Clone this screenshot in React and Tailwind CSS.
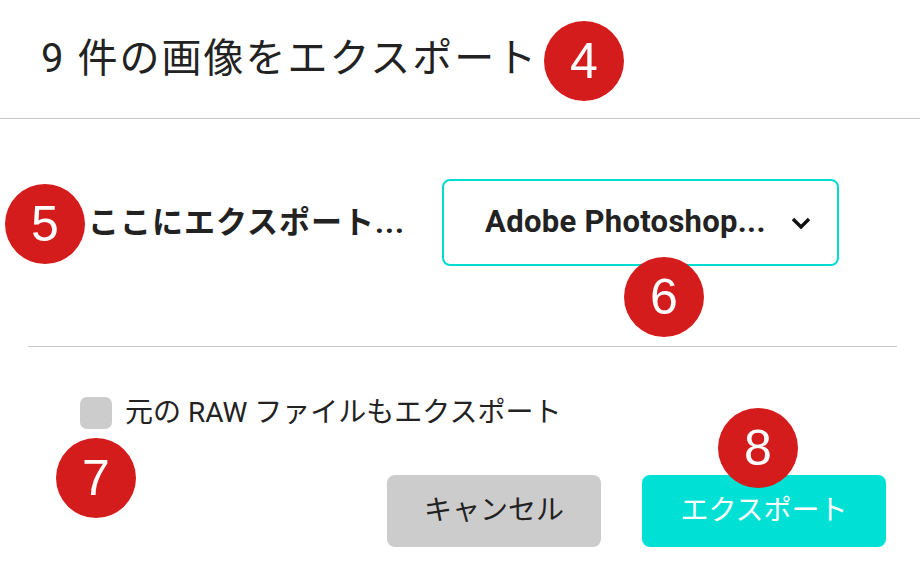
import React from "react"

const font = { fontFamily: '"Roboto", "Noto Sans CJK JP", sans-serif' }

function Badge({ n, className }) {
  return (
    <div
      className={`absolute flex items-center justify-center w-[80px] h-[80px] rounded-full bg-[#d41c1c] text-white text-[50px] leading-none font-['Liberation_Sans',sans-serif] ${className}`}
    >
      {n}
    </div>
  )
}

export default function App() {
  return (
    <div
      style={font}
      className="relative w-[920px] h-[588px] overflow-hidden bg-white text-[#222]"
    >
      {/* header */}
      <div className="flex h-[119px] items-center border-b border-[#c8c8c8] pl-[41px]">
        <h1 className="text-[40px] font-normal tracking-[2px] text-[#222]">
          9 件の画像をエクスポート
        </h1>
      </div>

      {/* destination */}
      <div className="flex items-center pt-[60px] pl-[88px]">
        <span className="w-[354px] text-[31px] font-bold leading-none tracking-[1px]">
          ここにエクスポート...
        </span>
        <div className="flex h-[87px] w-[397px] items-center justify-between rounded-[8px] border-2 border-[#00dcd0] pl-[41px] pr-[26px]">
          <span className="text-[31px] font-bold tracking-[0.3px]">
            Adobe Photoshop...
          </span>
          <svg width="20" height="12" viewBox="0 0 20 12" fill="none">
            <path d="M2 2l8 8 8-8" stroke="#111" strokeWidth="3.4" />
          </svg>
        </div>
      </div>

      <div className="mt-[80px] ml-[28px] mr-[23px] border-t border-[#c8c8c8]" />

      {/* raw checkbox */}
      <div className="flex items-center gap-[13px] pt-[50px] pl-[80px]">
        <div className="h-[32px] w-[32px] rounded-[7px] bg-[#cccccc]" />
        <span className="text-[28px] leading-none text-[#222]">
          元の RAW ファイルもエクスポート
        </span>
      </div>

      {/* buttons */}
      <div className="flex justify-end gap-[41px] pt-[46px] pr-[34px]">
        <button className="flex h-[72px] w-[214px] items-center justify-center rounded-[8px] bg-[#cccccc] text-[28px] text-[#222]">
          キャンセル
        </button>
        <button className="flex h-[72px] w-[244px] items-center justify-center rounded-[8px] bg-[#00e0d4] text-[28px] text-white">
          エクスポート
        </button>
      </div>

      <Badge n="4" className="left-[544px] top-[21px]" />
      <Badge n="5" className="left-[5px] top-[184px]" />
      <Badge n="6" className="left-[624px] top-[257px]" />
      <Badge n="7" className="left-[56px] top-[438px]" />
      <Badge n="8" className="left-[718px] top-[408px]" />
    </div>
  )
}
